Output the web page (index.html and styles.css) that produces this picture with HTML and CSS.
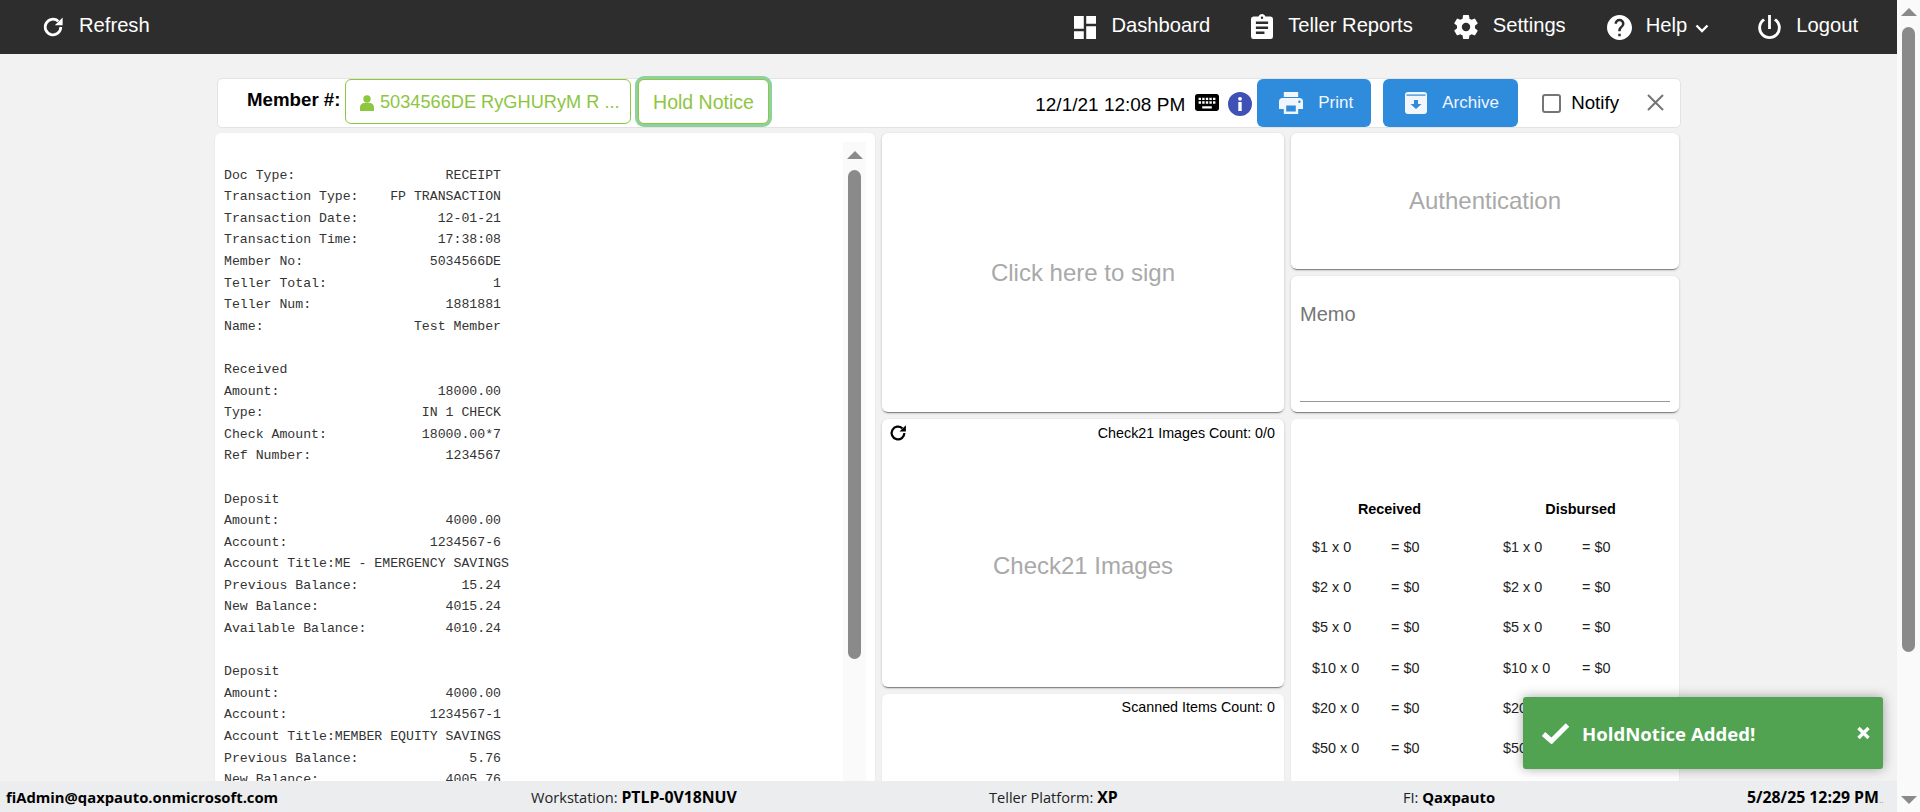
FILE: index.html
```html
<!DOCTYPE html>
<html lang="en">
<head>
<meta charset="UTF-8" />
<title>Teller Platform</title>
<link rel="stylesheet" href="styles.css">
</head>
<body>
<div class="page">
  <header class="topbar">
    <a class="nav-item refresh">
      <svg class="ic-refresh" viewBox="0 0 24 24"><path d="M20.5 12a8.5 8.5 0 1 1-2.7-6.2" fill="none" stroke="currentColor" stroke-width="3"/><path d="M22.5 1.5v8.5h-8.5z" fill="currentColor"/></svg>
      <span>Refresh</span>
    </a>
    <nav class="nav">
      <a class="nav-item">
        <svg class="ic-dash" viewBox="3 3 18 18" preserveAspectRatio="none"><path fill="currentColor" d="M13,3V9H21V3M13,21H21V11H13M3,21H11V15H3M3,13H11V3H3V13Z"/></svg>
        <span>Dashboard</span>
      </a>
      <a class="nav-item">
        <svg class="ic-clip" viewBox="3 1 18 20" preserveAspectRatio="none"><path fill="currentColor" d="M17,9H7V7H17M17,13H7V11H17M14,17H7V15H14M12,3A1,1 0 0,1 13,4A1,1 0 0,1 12,5A1,1 0 0,1 11,4A1,1 0 0,1 12,3M19,3H14.82C14.4,1.84 13.3,1 12,1C10.7,1 9.6,1.84 9.18,3H5A2,2 0 0,0 3,5V19A2,2 0 0,0 5,21H19A2,2 0 0,0 21,19V5A2,2 0 0,0 19,3Z"/></svg>
        <span>Teller Reports</span>
      </a>
      <a class="nav-item">
        <svg class="ic-gear" viewBox="2 2 20 20"><path fill="currentColor" d="M12,15.5A3.5,3.5 0 0,1 8.5,12A3.5,3.5 0 0,1 12,8.5A3.5,3.5 0 0,1 15.5,12A3.5,3.5 0 0,1 12,15.5M19.43,12.97C19.47,12.65 19.5,12.33 19.5,12C19.5,11.67 19.47,11.34 19.43,11L21.54,9.37C21.73,9.22 21.78,8.95 21.66,8.73L19.66,5.27C19.54,5.05 19.27,4.96 19.05,5.05L16.56,6.05C16.04,5.66 15.5,5.32 14.87,5.07L14.5,2.42C14.46,2.18 14.25,2 14,2H10C9.75,2 9.54,2.18 9.5,2.42L9.13,5.07C8.5,5.32 7.96,5.66 7.44,6.05L4.95,5.05C4.73,4.96 4.46,5.05 4.34,5.27L2.34,8.73C2.21,8.95 2.27,9.22 2.46,9.37L4.57,11C4.53,11.34 4.5,11.67 4.5,12C4.5,12.33 4.53,12.65 4.57,12.97L2.46,14.63C2.27,14.78 2.21,15.05 2.34,15.27L4.34,18.73C4.46,18.95 4.73,19.03 4.95,18.95L7.44,17.94C7.96,18.34 8.5,18.68 9.13,18.93L9.5,21.58C9.54,21.82 9.75,22 10,22H14C14.25,22 14.46,21.82 14.5,21.58L14.87,18.93C15.5,18.67 16.04,18.34 16.56,17.94L19.05,18.95C19.27,19.03 19.54,18.95 19.66,18.73L21.66,15.27C21.78,15.05 21.73,14.78 21.54,14.63L19.43,12.97Z"/></svg>
        <span>Settings</span>
      </a>
      <a class="nav-item">
        <svg class="ic-help" viewBox="2 2 20 20"><path fill="currentColor" d="M15.07,11.25L14.17,12.17C13.45,12.89 13,13.5 13,15H11V14.5C11,13.39 11.45,12.39 12.17,11.67L13.41,10.41C13.78,10.05 14,9.55 14,9C14,7.89 13.1,7 12,7A2,2 0 0,0 10,9H8A4,4 0 0,1 12,5A4,4 0 0,1 16,9C16,9.88 15.64,10.67 15.07,11.25M13,19H11V17H13M12,2A10,10 0 0,0 2,12A10,10 0 0,0 12,22A10,10 0 0,0 22,12C22,6.47 17.5,2 12,2Z"/></svg>
        <span>Help</span>
        <svg class="ic-chev" viewBox="0 0 14 9"><path d="M1.5 1.5L7 7l5.500-5.500" fill="none" stroke="currentColor" stroke-width="2.400"/></svg>
      </a>
      <a class="nav-item logout">
        <svg class="ic-power" viewBox="4 3 16 17"><path fill="currentColor" d="M16.56,5.44L15.11,6.89C16.84,7.94 18,9.83 18,12A6,6 0 0,1 12,18A6,6 0 0,1 6,12C6,9.83 7.16,7.94 8.88,6.88L7.44,5.44C5.36,6.88 4,9.28 4,12A8,8 0 0,0 12,20A8,8 0 0,0 20,12C20,9.28 18.64,6.88 16.56,5.44M13,3H11V13H13"/></svg>
        <span>Logout</span>
      </a>
    </nav>
  </header>

  <main class="content">
    <section class="member-bar">
      <label class="member-label">Member #:</label>
      <div class="member-field">
        <svg class="ic-person" viewBox="0 0 14 16"><circle cx="7" cy="4" r="3.700" fill="currentColor"/><path fill="currentColor" d="M0 16v-3.500C0 9.500 2 8 4.200 8h5.600C12 8 14 9.500 14 12.500V16z"/></svg>
        <span>5034566DE RyGHURyM R ...</span>
      </div>
      <button class="hold-btn">Hold Notice</button>
      <div class="bar-right">
        <span class="stamp">12/1/21 12:08 PM</span>
        <svg class="ic-keys" viewBox="2 5 20 14" preserveAspectRatio="none"><path fill="#000" d="M19,10H17V8H19M19,13H17V11H19M16,10H14V8H16M16,13H14V11H16M16,17H8V15H16M7,10H5V8H7M7,13H5V11H7M8,11H10V13H8M8,8H10V10H8M11,11H13V13H11M11,8H13V10H11M20,5H4C2.89,5 2,5.89 2,7V17A2,2 0 0,0 4,19H20A2,2 0 0,0 22,17V7C22,5.89 21.1,5 20,5Z"/></svg>
        <svg class="ic-info" viewBox="0 0 24 24"><circle cx="12" cy="12" r="12" fill="#3f51b5"/><rect x="10.300" y="10" width="3.400" height="9" fill="#fff"/><circle cx="12" cy="6.800" r="1.900" fill="#fff"/></svg>
        <button class="action-btn print-btn">
          <svg class="ic-print" viewBox="2 3 20 18" preserveAspectRatio="none"><path fill="currentColor" d="M18,3H6V7H18M19,12A1,1 0 0,1 18,11A1,1 0 0,1 19,10A1,1 0 0,1 20,11A1,1 0 0,1 19,12M16,19H8V14H16M19,8H5A3,3 0 0,0 2,11V17H6V21H18V17H22V11A3,3 0 0,0 19,8Z"/></svg>
          <span>Print</span>
        </button>
        <button class="action-btn archive-btn">
          <svg class="ic-archive" viewBox="0 0 22 22"><path fill="currentColor" d="M3 0h16a3 3 0 0 1 3 3v16a3 3 0 0 1-3 3H3a3 3 0 0 1-3-3V3a3 3 0 0 1 3-3z"/><rect x="1.500" y="2.500" width="19" height="1.200" fill="#2f8bdc"/><path fill="#2f8bdc" d="M9 8h4v4h3.500L11 17l-5.500-5H9z"/></svg>
          <span>Archive</span>
        </button>
        <span class="check-box"></span>
        <span class="notify">Notify</span>
        <svg class="ic-close" viewBox="0 0 17 17"><path d="M1 1l15 15M16 1L1 16" stroke="#757575" stroke-width="2" fill="none"/></svg>
      </div>
    </section>

    <div class="columns">
      <section class="card receipt">
<pre class="receipt-text">

Doc Type:                   RECEIPT
Transaction Type:    FP TRANSACTION
Transaction Date:          12-01-21
Transaction Time:          17:38:08
Member No:                5034566DE
Teller Total:                     1
Teller Num:                 1881881
Name:                   Test Member

Received
Amount:                    18000.00
Type:                    IN 1 CHECK
Check Amount:            18000.00*7
Ref Number:                 1234567

Deposit
Amount:                     4000.00
Account:                  1234567-6
Account Title:ME - EMERGENCY SAVINGS
Previous Balance:             15.24
New Balance:                4015.24
Available Balance:          4010.24

Deposit
Amount:                     4000.00
Account:                  1234567-1
Account Title:MEMBER EQUITY SAVINGS
Previous Balance:              5.76
New Balance:                4005.76
</pre>
        <div class="receipt-scroll">
          <span class="arrow-up"></span>
          <span class="receipt-thumb"></span>
        </div>
      </section>

      <div class="col-mid">
        <section class="card sign-card placeholder">Click here to sign</section>
        <section class="card images-card">
          <div class="count-row">
            <svg class="ic-reload" viewBox="0 0 24 24"><path d="M20.500 12a8.500 8.500 0 1 1-2.700-6.200" fill="none" stroke="#000" stroke-width="3"/><path d="M22.500 1.500v8.500h-8.500z" fill="#000"/></svg>
            <span>Check21 Images Count: 0/0</span>
          </div>
          <div class="placeholder images-label">Check21 Images</div>
        </section>
        <section class="card scanned-card">
          <div class="count-row count-end"><span>Scanned Items Count: 0</span></div>
        </section>
      </div>

      <div class="col-right">
        <section class="card auth-card placeholder">Authentication</section>
        <section class="card memo-card">
          <div class="memo-label">Memo</div>
          <div class="memo-line"></div>
        </section>
        <section class="card cash-card">
          <div class="cash-grid">
            <div class="cash-col">
              <div class="cash-head">Received</div>
              <div class="cash-row"><span>$1 x 0</span><span>= $0</span></div>
              <div class="cash-row"><span>$2 x 0</span><span>= $0</span></div>
              <div class="cash-row"><span>$5 x 0</span><span>= $0</span></div>
              <div class="cash-row"><span>$10 x 0</span><span>= $0</span></div>
              <div class="cash-row"><span>$20 x 0</span><span>= $0</span></div>
              <div class="cash-row"><span>$50 x 0</span><span>= $0</span></div>
            </div>
            <div class="cash-col">
              <div class="cash-head">Disbursed</div>
              <div class="cash-row"><span>$1 x 0</span><span>= $0</span></div>
              <div class="cash-row"><span>$2 x 0</span><span>= $0</span></div>
              <div class="cash-row"><span>$5 x 0</span><span>= $0</span></div>
              <div class="cash-row"><span>$10 x 0</span><span>= $0</span></div>
              <div class="cash-row"><span>$20 x 0</span><span>= $0</span></div>
              <div class="cash-row"><span>$50 x 0</span><span>= $0</span></div>
            </div>
          </div>
        </section>
      </div>
    </div>
  </main>

  <footer class="status">
    <div><b>fiAdmin@qaxpauto.onmicrosoft.com</b></div>
    <div>Workstation: <b class="caps">PTLP-0V18NUV</b></div>
    <div>Teller Platform: <b class="caps">XP</b></div>
    <div>FI: <b>Qaxpauto</b></div>
    <div class="status-end"><b class="caps">5/28/25 12:29 PM</b><span class="clipped">..</span></div>
  </footer>

  <div class="toast">
    <svg class="ic-check" viewBox="0 0 29 22"><path d="M2.500 12l8 7L26.500 3" fill="none" stroke="#fff" stroke-width="5"/></svg>
    <span class="toast-text">HoldNotice Added!</span>
    <svg class="ic-toast-x" viewBox="0 0 13 12"><path d="M1.500 1l10 10M11.500 1l-10 10" stroke="#fff" stroke-width="3.400" fill="none"/></svg>
  </div>
</div>

<div class="page-scroll">
  <span class="arrow-up"></span>
  <span class="page-thumb"></span>
  <span class="arrow-down"></span>
</div>
</body>
</html>
```

FILE: styles.css
```css
/* Reset */
* {
  box-sizing: border-box;
}
html, body {
  height: 100%;
}
body {
  margin: 0;
  display: flex;
  overflow: hidden;
  background: #fff;
  color: #000;
  font-family: "Liberation Sans", Arial, sans-serif;
}
svg {
  display: block;
  flex: none;
}

.page {
  position: relative;
  flex: 1;
  min-width: 0;
  display: flex;
  flex-direction: column;
  background: #f2f2f2;
}

/* Top bar */
.topbar {
  height: 54px;
  flex: none;
  display: flex;
  align-items: center;
  justify-content: space-between;
  padding: 0 39px 0 42px;
  background: #2d2d2d;
  color: #fff;
  font-size: 20.200px;
}
.nav {
  display: flex;
  align-items: center;
  gap: 41px;
}
.nav-item {
  display: flex;
  align-items: center;
  gap: 15px;
}
.nav-item span {
  margin-bottom: 3px;
}
.logout {
  margin-left: 8px;
}
.ic-refresh { width: 22px; height: 22px; }
.ic-dash { width: 22px; height: 23px; }
.ic-clip { width: 22px; height: 25px; margin-bottom: 2px; }
.ic-gear { width: 24px; height: 24px; }
.ic-help { width: 25px; height: 25px; margin-right: -1px; }
.ic-chev { width: 14px; height: 9px; margin-left: -7px; margin-top: 2px; }
.ic-power { width: 23px; height: 24px; }

/* Member bar */
.content {
  flex: 1;
  min-height: 0;
  overflow: hidden;
  padding: 24px 0 0 215px;
}
.member-bar {
  display: flex;
  width: 1464px;
  height: 50px;
  margin-left: 2px;
  background: #fff;
  border: 1px solid #e3e3e3;
  border-radius: 5px;
}
.member-label {
  margin-left: 29px;
  width: 98px;
  font-size: 18.700px;
  font-weight: 700;
  line-height: 42px;
}
.member-field,
.hold-btn {
  height: 45px;
  padding-top: 2px;
  background: #fff;
  border: 1px solid #8dc63f;
  border-radius: 6px;
  color: #8dc63f;
  font: 19.500px "Liberation Sans", Arial, sans-serif;
}
.member-field {
  width: 286px;
  display: flex;
  align-items: center;
  gap: 6px;
  padding-left: 14px;
  font-size: 18.200px;
  white-space: nowrap;
}
.ic-person { width: 14px; height: 16px; }
.hold-btn {
  width: 131px;
  margin-left: 7px;
  padding-left: 0;
  padding-right: 0;
  box-shadow: 0 0 0 3px #8fd19e;
}
.bar-right {
  margin-left: auto;
  display: flex;
}
.stamp {
  font-size: 19px;
  line-height: 52px;
}
.ic-keys { width: 24px; height: 17px; margin: 15px 0 0 10px; }
.ic-info { width: 24px; height: 24px; margin: 13px 0 0 9px; }
.action-btn {
  display: flex;
  align-items: center;
  height: 48px;
  padding: 0;
  background: #2f8bdc;
  border: 0;
  border-radius: 6px;
  color: #f0f6fc;
  font: 17px "Liberation Sans", Arial, sans-serif;
}
.print-btn {
  width: 114px;
  margin-left: 5px;
  padding-left: 22px;
  gap: 15px;
}
.archive-btn {
  width: 135px;
  margin-left: 12px;
  padding-left: 22px;
  gap: 15px;
}
.ic-print { width: 24px; height: 22px; }
.ic-archive { width: 22px; height: 22px; }
.check-box {
  width: 19px;
  height: 19px;
  margin: 15px 0 0 24px;
  border: 2px solid #757575;
  border-radius: 3px;
}
.notify {
  margin-left: 10px;
  font-size: 18.700px;
  line-height: 48px;
}
.ic-close { width: 17px; height: 17px; margin: 15px 16px 0 28px; }

/* Cards */
.columns {
  display: grid;
  grid-template-columns: 660px 402px 388px;
  gap: 7px;
  margin-top: 5px;
  height: 800px;
}
.card {
  background: #fff;
  border-radius: 6px;
  box-shadow: 0 1px 2px rgba(0, 0, 0, 0.1);
}
.placeholder {
  display: flex;
  align-items: center;
  justify-content: center;
  color: #a9a9a9;
  font-size: 24px;
}
.col-mid,
.col-right {
  display: flex;
  flex-direction: column;
  gap: 7px;
}
.sign-card,
.images-card,
.auth-card,
.memo-card {
  box-shadow: 0 2px 1px -1px #7f7f7f, 0 1px 3px rgba(0, 0, 0, 0.2);
}

/* Receipt */
.receipt {
  display: flex;
}
.receipt-text {
  flex: 1;
  margin: 0;
  padding: 10px 0 0 9px;
  color: #333;
  font: 13.200px/21.600px "Liberation Mono", monospace;
}
.receipt-scroll {
  width: 23px;
  margin: 9px 9px 0 0;
  padding-top: 9px;
  display: flex;
  flex-direction: column;
  align-items: center;
  background: #fafafa;
}
.receipt-thumb {
  width: 13px;
  height: 489px;
  margin-top: 11px;
  border-radius: 7px;
  background: #8a8a8a;
}
.arrow-up,
.arrow-down {
  width: 0;
  height: 0;
  border-left: 8px solid transparent;
  border-right: 8px solid transparent;
}
.arrow-up {
  border-bottom: 8px solid #8a8a8a;
}
.arrow-down {
  border-top: 8px solid #8a8a8a;
}

/* Middle column */
.sign-card {
  height: 279px;
}
.images-card {
  height: 268px;
  display: flex;
  flex-direction: column;
}
.scanned-card {
  flex: 1;
}
.count-row {
  display: flex;
  align-items: center;
  justify-content: space-between;
  padding: 5px 9px 0 7px;
  font-size: 14.300px;
}
.count-end {
  justify-content: flex-end;
}
.ic-reload { width: 18px; height: 18px; }
.images-label {
  flex: 1;
  padding-top: 2px;
}

/* Right column */
.auth-card {
  height: 136px;
}
.memo-card {
  height: 136px;
  padding: 27px 9px 0;
}
.memo-label {
  color: #757575;
  font-size: 20px;
  line-height: 23px;
}
.memo-line {
  margin-top: 75px;
  border-top: 1px solid #999;
}
.cash-card {
  flex: 1;
  padding: 80px 0 0 21px;
}
.cash-grid {
  display: grid;
  grid-template-columns: 191px 191px;
}
.cash-head {
  width: 155px;
  height: 20px;
  margin-bottom: 8px;
  text-align: center;
  font-size: 14.400px;
  font-weight: 700;
  line-height: 20px;
}
.cash-row {
  display: grid;
  grid-template-columns: 79px 1fr;
  height: 40.200px;
  color: #222;
  font-size: 14.400px;
  line-height: 40.200px;
}

/* Status bar */
.status {
  height: 31px;
  flex: none;
  display: grid;
  grid-template-columns: 525px 458px 414px 344px 1fr;
  align-items: center;
  padding-left: 6px;
  background: #ebedef;
  color: #222;
  font: 14.600px "Open Sans", sans-serif;
  white-space: nowrap;
}
.status b {
  color: #000;
  font-size: 14.800px;
}
.status b.caps {
  font-size: 15.800px;
}
.clipped {
  color: #999;
  font-size: 9px;
}

/* Toast */
.toast {
  position: absolute;
  right: 14px;
  bottom: 43px;
  width: 360px;
  height: 72px;
  display: flex;
  align-items: center;
  padding: 0 13px 0 18px;
  background: #51a351;
  border-radius: 3px;
  box-shadow: 0 0 12px rgba(0, 0, 0, 0.35);
  color: #fff;
}
.ic-check { width: 29px; height: 22px; }
.toast-text {
  flex: 1;
  margin-left: 12px;
  font: 700 18.600px "Open Sans", sans-serif;
}
.ic-toast-x { width: 13px; height: 12px; }

/* Window scrollbar */
.page-scroll {
  width: 23px;
  flex: none;
  display: flex;
  flex-direction: column;
  align-items: center;
  padding: 8px 0;
  background: #fafafa;
}
.page-thumb {
  width: 13px;
  height: 625px;
  margin-top: 11px;
  border-radius: 7px;
  background: #8a8a8a;
}
.page-scroll .arrow-down {
  margin-top: auto;
}
```
